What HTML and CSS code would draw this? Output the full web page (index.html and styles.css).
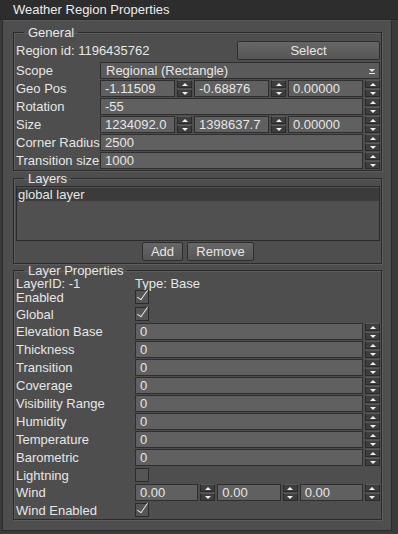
FILE: index.html
```html
<!DOCTYPE html>
<html>
<head>
  <meta charset="utf-8" />
  <title>Weather Region Properties</title>
  <link rel="stylesheet" href="styles.css">
</head>
<body>
  <div class="titlebar">Weather Region Properties</div>
  <div class="frame">

    <fieldset class="group general">
      <legend>General</legend>
      <div class="row idrow">
        <span>Region id: 1196435762</span>
        <button class="btn select">Select</button>
      </div>
      <div class="row">
        <label>Scope</label>
        <div class="combo">Regional (Rectangle)<span class="arrow"></span></div>
      </div>
      <div class="row">
        <label>Geo Pos</label>
        <div class="multi">
          <div class="spin"><div class="field">-1.11509</div><div class="arrows"><i class="up"></i><i class="down"></i></div></div>
          <div class="spin"><div class="field">-0.68876</div><div class="arrows"><i class="up"></i><i class="down"></i></div></div>
          <div class="spin"><div class="field">0.00000</div><div class="arrows"><i class="up"></i><i class="down"></i></div></div>
        </div>
      </div>
      <div class="row">
        <label>Rotation</label>
        <div class="spin"><div class="field">-55</div><div class="arrows"><i class="up"></i><i class="down"></i></div></div>
      </div>
      <div class="row">
        <label>Size</label>
        <div class="multi">
          <div class="spin"><div class="field">1234092.0</div><div class="arrows"><i class="up"></i><i class="down"></i></div></div>
          <div class="spin"><div class="field">1398637.7</div><div class="arrows"><i class="up"></i><i class="down"></i></div></div>
          <div class="spin"><div class="field">0.00000</div><div class="arrows"><i class="up"></i><i class="down"></i></div></div>
        </div>
      </div>
      <div class="row">
        <label>Corner Radius</label>
        <div class="spin"><div class="field">2500</div><div class="arrows"><i class="up"></i><i class="down"></i></div></div>
      </div>
      <div class="row">
        <label>Transition size</label>
        <div class="spin"><div class="field">1000</div><div class="arrows"><i class="up"></i><i class="down"></i></div></div>
      </div>
    </fieldset>

    <fieldset class="group layers">
      <legend>Layers</legend>
      <div class="list">
        <div class="item selected">global layer</div>
      </div>
      <div class="buttons">
        <button class="btn add">Add</button>
        <button class="btn remove">Remove</button>
      </div>
    </fieldset>

    <fieldset class="group props">
      <legend>Layer Properties</legend>
      <div class="row idline"><label>LayerID: -1</label><span>Type: Base</span></div>
      <div class="row check"><label>Enabled</label><span class="box checked"></span></div>
      <div class="row check"><label>Global</label><span class="box checked"></span></div>
      <div class="row"><label>Elevation Base</label><div class="spin"><div class="field">0</div><div class="arrows"><i class="up"></i><i class="down"></i></div></div></div>
      <div class="row"><label>Thickness</label><div class="spin"><div class="field">0</div><div class="arrows"><i class="up"></i><i class="down"></i></div></div></div>
      <div class="row"><label>Transition</label><div class="spin"><div class="field">0</div><div class="arrows"><i class="up"></i><i class="down"></i></div></div></div>
      <div class="row"><label>Coverage</label><div class="spin"><div class="field">0</div><div class="arrows"><i class="up"></i><i class="down"></i></div></div></div>
      <div class="row"><label>Visibility Range</label><div class="spin"><div class="field">0</div><div class="arrows"><i class="up"></i><i class="down"></i></div></div></div>
      <div class="row"><label>Humidity</label><div class="spin"><div class="field">0</div><div class="arrows"><i class="up"></i><i class="down"></i></div></div></div>
      <div class="row"><label>Temperature</label><div class="spin"><div class="field">0</div><div class="arrows"><i class="up"></i><i class="down"></i></div></div></div>
      <div class="row"><label>Barometric</label><div class="spin"><div class="field">0</div><div class="arrows"><i class="up"></i><i class="down"></i></div></div></div>
      <div class="row check"><label>Lightning</label><span class="box"></span></div>
      <div class="row">
        <label>Wind</label>
        <div class="multi">
          <div class="spin"><div class="field">0.00</div><div class="arrows"><i class="up"></i><i class="down"></i></div></div>
          <div class="spin"><div class="field">0.00</div><div class="arrows"><i class="up"></i><i class="down"></i></div></div>
          <div class="spin"><div class="field">0.00</div><div class="arrows"><i class="up"></i><i class="down"></i></div></div>
        </div>
      </div>
      <div class="row check"><label>Wind Enabled</label><span class="box checked"></span></div>
    </fieldset>

  </div>
</body>
</html>
```

FILE: styles.css
```css
body {
  margin: 0;
  background-color: #3a3a3a;
  font-family: "Liberation Sans", Arial, sans-serif;
  font-size: 13px;
  color: #e6e6e6;
  width: 398px;
  height: 534px;
  overflow: hidden;
}

.titlebar {
  height: 19px;
  line-height: 19px;
  padding-left: 13px;
  font-size: 13px;
  background-color: #2d2d2d;
  color: #ececec;
  border-bottom: 1px solid #262626;
}

.frame {
  margin-left: 2px;
  width: 378px;
  height: 498px;
  padding: 5px 0 6px 10px;
  background-color: #4e4e4e;
  border: 1px solid #2a2a2a;
  border-top-color: #5a5a5a;
}

.group {
  margin: 0 0 1px 0;
  width: 364px;
  padding: 1px 1px 1px 2px;
  border: 1px solid #2b2b2b;
  box-shadow: 1px 1px 0 #5c5c5c, inset 1px 1px 0 #5c5c5c;
  display: flex;
  flex-direction: column;
  gap: 1px;
}

.general {
  padding-top: 2px;
}

.layers {
  margin-bottom: 0;
}

legend {
  margin-left: 8px;
  padding: 0 4px;
  font-size: 13px;
  line-height: 13px;
  color: #e6e6e6;
}

.row {
  display: grid;
  grid-template-columns: 84px 1fr;
  height: 17px;
  align-items: center;
  white-space: nowrap;
}

.idrow {
  display: flex;
  justify-content: space-between;
  height: 19px;
  margin-bottom: 1px;
}

.btn {
  font-family: "Liberation Sans", Arial, sans-serif;
  font-size: 13px;
  color: #e6e6e6;
  background-color: #5c5c5c;
  background-image: linear-gradient(#666666, #565656);
  border: 1px solid #2e2e2e;
  border-radius: 2px;
  padding: 0;
  height: 19px;
}

.select {
  width: 143px;
}

.combo {
  position: relative;
  height: 17px;
  line-height: 15px;
  box-sizing: border-box;
  padding-left: 5px;
  background-color: #5a5a5a;
  border: 1px solid #2e2e2e;
}

.arrow {
  position: absolute;
  right: 4px;
  top: 6px;
  width: 6px;
  height: 4px;
  border-bottom: 1px solid #e6e6e6;
}

.arrow::before {
  content: "";
  position: absolute;
  left: 0;
  top: 0;
  border-left: 3px solid transparent;
  border-right: 3px solid transparent;
  border-top: 3px solid #e6e6e6;
}

.multi {
  display: flex;
  gap: 2px;
}

.multi .spin {
  flex: 1;
}

.spin {
  display: flex;
  gap: 2px;
  height: 17px;
  min-width: 0;
}

.field {
  flex: 1;
  min-width: 0;
  box-sizing: border-box;
  height: 17px;
  line-height: 15px;
  padding-left: 4px;
  background-color: #606060;
  border: 1px solid #2e2e2e;
  overflow: hidden;
}

.arrows {
  width: 15px;
  display: flex;
  flex-direction: column;
  gap: 1px;
}

.arrows i {
  flex: 1;
  box-sizing: border-box;
  background-color: #3e3e3e;
  border: 1px solid #2a2a2a;
  border-top-color: #5a5a5a;
  display: flex;
  align-items: center;
  justify-content: center;
}

.arrows i::after {
  content: "";
  border-left: 3px solid transparent;
  border-right: 3px solid transparent;
}

.arrows .up::after {
  border-bottom: 3px solid #f0f0f0;
}

.arrows .down::after {
  border-top: 3px solid #f0f0f0;
}

.layers .list {
  height: 52px;
  padding-top: 1px;
  box-sizing: content-box;
  background-color: #505050;
  border: 1px solid #2b2b2b;
}

.item {
  height: 13px;
  line-height: 13px;
  padding-left: 1px;
}

.item.selected {
  background-color: #3b3b3b;
}

.buttons {
  display: flex;
  justify-content: center;
  gap: 4px;
  padding: 0 0 1px;
}

.buttons .btn {
  height: 19px;
}

.add {
  width: 41px;
}

.remove {
  width: 67px;
}

.props .row {
  grid-template-columns: 119px 1fr;
}

.props .idline {
  height: 12px;
  margin-top: -2px;
}

.props .check {
  height: 16px;
}

.box {
  width: 12px;
  height: 12px;
  background-color: #555;
  border: 1px solid #2b2b2b;
  position: relative;
}

.box.checked::after {
  content: "";
  position: absolute;
  left: 4px;
  top: -3px;
  width: 4px;
  height: 11px;
  border-right: 1px solid #e6e6e6;
  border-bottom: 1px solid #e6e6e6;
  transform: rotate(35deg);
}
```
